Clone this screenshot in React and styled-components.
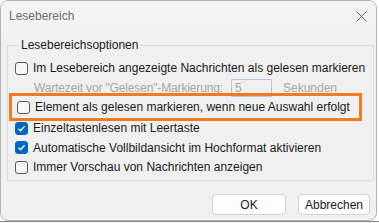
import React from 'react'
import styled, { createGlobalStyle } from 'styled-components'

const Global = createGlobalStyle`
  html, body { margin: 0; padding: 0; background: #ffffff; }
  body { font-family: "Liberation Sans", Arial, sans-serif; font-size: 12px; color: #1b1b1b; }
`

const Screen = styled.div`
  width: 379px;
  height: 223px;
  display: flex;
  flex-direction: column;
  overflow: hidden;
`

const Window = styled.div`
  width: 377px;
  height: 221px;
  flex: none;
  box-sizing: border-box;
  border: 1px solid #b4b4b4;
  border-radius: 8px;
  background: #f0f0f0;
  overflow: hidden;
  display: flex;
  flex-direction: column;
`

const Backdrop = styled.div`
  flex: 1;
  border-top: 1px solid #8a8a8a;
  background: #f7f7f7;
`

const TitleBar = styled.div`
  height: 30px;
  flex: none;
  background: #f3f3f3;
  display: flex;
  align-items: center;
  justify-content: space-between;
  padding: 0 9px 0 8px;
`

const Title = styled.span`
  color: #6d6d6d;
  font-size: 12px;
`

const Body = styled.div`
  flex: 1;
  display: flex;
  flex-direction: column;
  padding: 7px 3px 0 6px;
`

const Group = styled.fieldset`
  margin: 0;
  padding: 6px 8px 3px 7px;
  border: 1px solid #dcdcdc;
  display: flex;
  flex-direction: column;
`

const Legend = styled.legend`
  padding: 0 2px;
  margin-left: 4px;
  color: #1b1b1b;
`

const Row = styled.label`
  display: flex;
  align-items: center;
  gap: 5px;
  height: ${p => p.$h || 20}px;
  flex: none;
  color: ${p => (p.$disabled ? '#a6a6a6' : '#1b1b1b')};
  padding-left: ${p => p.$indent || 0}px;
  white-space: nowrap;
`

const Caption = styled.span`
  width: ${p => p.$w}px;
  flex: none;
  letter-spacing: -0.15px;
`

const Highlight = styled.div`
  margin: -5px 3px -3px -6px;
  padding: 0 0 0 5px;
  border: 3px solid #f47a20;
  height: 22px;
  flex: none;
  display: flex;
  align-items: center;
`

const Box = styled.span`
  width: 13px;
  height: 13px;
  flex: none;
  box-sizing: border-box;
  border-radius: 3px;
  border: 1px solid ${p => (p.$checked ? '#0067c0' : '#5a5a5a')};
  background: ${p => (p.$checked ? '#0067c0' : '#f7f7f7')};
  display: flex;
  align-items: center;
  justify-content: center;
`

const Input = styled.span`
  width: 41px;
  height: 18px;
  flex: none;
  box-sizing: border-box;
  border: 1px solid #b8c8da;
  background: #f0f0f0;
  color: #a6a6a6;
  padding-left: 3px;
  display: flex;
  align-items: center;
  margin-right: 6px;
`

const Footer = styled.div`
  display: flex;
  justify-content: flex-end;
  gap: 12px;
  padding: 13px 3px 0 0;
`

const Button = styled.button`
  width: ${p => p.$w}px;
  height: 21px;
  box-sizing: border-box;
  border: 1px solid #d2d2d2;
  border-radius: 4px;
  background: #fdfdfd;
  font: inherit;
  color: #1b1b1b;
  padding: 0;
`

const Check = ({ checked }) => (
  <Box $checked={checked}>
    {checked && (
      <svg width="9" height="9" viewBox="0 0 9 9">
        <path d="M1.5 4.8 L3.5 6.8 L7.6 2.2" fill="none" stroke="#fff" strokeWidth="1.3" />
      </svg>
    )}
  </Box>
)

export default function App() {
  return (
    <>
      <Global />
      <Screen>
        <Window>
          <TitleBar>
            <Title>Lesebereich</Title>
            <svg width="11" height="11" viewBox="0 0 11 11">
              <path d="M0.5 0.5 L10.5 10.5 M10.5 0.5 L0.5 10.5" stroke="#5f5f5f" strokeWidth="1" />
            </svg>
          </TitleBar>
          <Body>
            <Group>
              <Legend>Lesebereichsoptionen</Legend>
              <Row>
                <Check />
                Im Lesebereich angezeigte Nachrichten als gelesen markieren
              </Row>
              <Row $disabled $indent={19} $h={20}>
                <Caption $w={192}>Wartezeit vor "Gelesen"-Markierung:</Caption>
                <Input>5</Input>
                Sekunden
              </Row>
              <Highlight>
                <Row>
                  <Check />
                  Element als gelesen markieren, wenn neue Auswahl erfolgt
                </Row>
              </Highlight>
              <Row>
                <Check checked />
                Einzeltastenlesen mit Leertaste
              </Row>
              <Row $h={19}>
                <Check checked />
                Automatische Vollbildansicht im Hochformat aktivieren
              </Row>
              <Row>
                <Check />
                Immer Vorschau von Nachrichten anzeigen
              </Row>
            </Group>
            <Footer>
              <Button $w={74}>OK</Button>
              <Button $w={72}>Abbrechen</Button>
            </Footer>
          </Body>
        </Window>
        <Backdrop />
      </Screen>
    </>
  )
}
